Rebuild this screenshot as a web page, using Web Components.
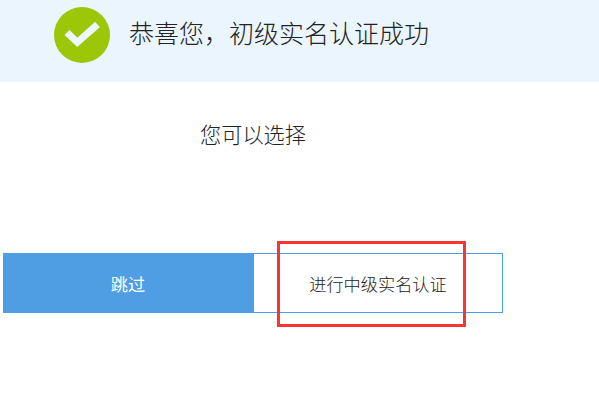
<!DOCTYPE html>
<html lang="zh">
<head>
<meta charset="utf-8">
<title>实名认证</title>
<style>
  html, body { margin: 0; background: #fff; }
  body { font-family: "Noto Sans CJK SC", "Liberation Sans", sans-serif; }
</style>
</head>
<body>
<result-page></result-page>
<script>
class SuccessBanner extends HTMLElement {
  constructor() {
    super();
    this.attachShadow({mode: 'open'}).innerHTML = `
    <style>
      :host {
        display: flex;
        align-items: flex-start;
        gap: 19px;
        height: 82px;
        box-sizing: border-box;
        padding: 7px 0 0 54px;
        background: #eaf5fe;
      }
      svg { display: block; flex: none; }
      p {
        margin: 0;
        font-size: 25px;
        line-height: 50px;
        font-weight: 300;
        color: #222;
        white-space: nowrap;
      }
    </style>
    <svg width="56" height="56" viewBox="0 0 56 56">
      <circle cx="28" cy="28" r="28" fill="#9bc707"/>
      <path d="M13 25.5 L23.3 35.3 L43.5 17.5" fill="none" stroke="#eef7fc" stroke-width="7"/>
    </svg>
    <p><slot></slot></p>
    `;
  }
}

class ActionButton extends HTMLElement {
  constructor() {
    super();
    this.attachShadow({mode: 'open'}).innerHTML = `
    <style>
      :host {
        display: flex;
        align-items: center;
        justify-content: center;
        width: 250px;
        height: 60px;
        box-sizing: border-box;
        font-size: 17.2px;
        font-weight: 300;
        cursor: pointer;
        border: 1px solid #4f9de3;
        background: #fff;
        color: #222;
      }
      :host([primary]) {
        background: #4f9de3;
        color: #fff;
        font-weight: 400;
      }
    </style>
    <slot></slot>
    `;
  }
}

class ResultPage extends HTMLElement {
  constructor() {
    super();
    this.attachShadow({mode: 'open'}).innerHTML = `
    <style>
      :host { display: block; position: relative; height: 401px; overflow: hidden; }
      .hint {
        margin: 0;
        padding: 36px 0 0 200px;
        font-size: 21.2px;
        font-weight: 300;
        line-height: 31px;
        color: #222;
      }
      .actions {
        display: flex;
        margin: 104px 0 0 3px;
      }
      .mark {
        position: absolute;
        left: 277px;
        top: 241px;
        width: 189px;
        height: 86px;
        box-sizing: border-box;
        border: 3px solid #f83535;
      }
    </style>
    <success-banner>恭喜您，初级实名认证成功</success-banner>
    <p class="hint">您可以选择</p>
    <div class="actions">
      <action-button primary>跳过</action-button>
      <action-button>进行中级实名认证</action-button>
    </div>
    <div class="mark"></div>
    `;
  }
}

customElements.define('success-banner', SuccessBanner);
customElements.define('action-button', ActionButton);
customElements.define('result-page', ResultPage);
</script>
</body>
</html>
